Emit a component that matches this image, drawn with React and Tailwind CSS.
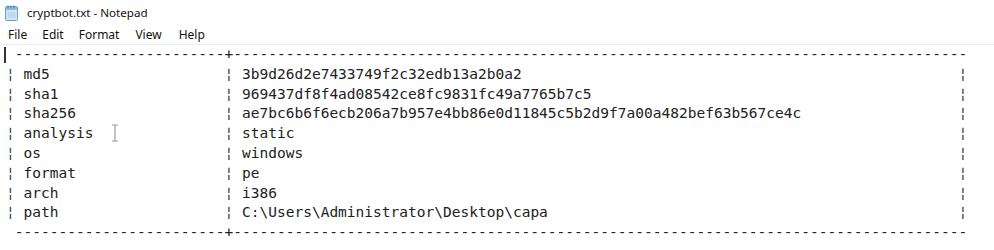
import React from 'react';

const rows = [
  ['md5', '3b9d26d2e7433749f2c32edb13a2b0a2'],
  ['sha1', '969437df8f4ad08542ce8fc9831fc49a7765b7c5'],
  ['sha256', 'ae7bc6b6f6ecb206a7b957e4bb86e0d11845c5b2d9f7a00a482bef63b567ce4c'],
  ['analysis', 'static'],
  ['os', 'windows'],
  ['format', 'pe'],
  ['arch', 'i386'],
  ['path', 'C:\\Users\\Administrator\\Desktop\\capa'],
];

const rule = ' ' + '-'.repeat(24) + '+' + '-'.repeat(84);

function NotepadIcon() {
  return (
    <svg width="18" height="18" viewBox="0 0 18 18">
      <rect x="2.5" y="2.5" width="12" height="14" rx="1" fill="#cfe6f7" stroke="#6f9fc7" />
      <rect x="3" y="3" width="11" height="3" fill="#8cc2ea" />
      <path d="M5 1.5v3M8 1.5v3M11 1.5v3" stroke="#5a7a96" strokeWidth="1" />
      <path d="M4.5 9h8M4.5 11h8M4.5 13h8" stroke="#a7c7e0" strokeWidth="0.8" />
    </svg>
  );
}

function Bar() {
  return <span className="text-[#2e3f55]">¦</span>;
}

export default function App() {
  return (
    <div className="w-[994px] h-[250px] bg-white overflow-hidden relative" style={{ fontFamily: '"Noto Sans", "Open Sans", sans-serif' }}>
      {/* title bar */}
      <div className="h-[24px] flex items-center pl-[3px] pt-[1px] gap-[6px]">
        <NotepadIcon />
        <span className="text-[11.6px] text-[#111]">cryptbot.txt - Notepad</span>
      </div>

      {/* menu */}
      <div className="h-[21px] flex items-center pt-[2px] text-[12px] text-[#111] border-b border-[#ececec]">
        <span className="ml-[8px]">File</span>
        <span className="ml-[15px]">Edit</span>
        <span className="ml-[15px]">Format</span>
        <span className="ml-[16px]">View</span>
        <span className="ml-[17px]">Help</span>
      </div>

      {/* text area */}
      <pre
        className="pl-[6px] text-[14.53px] leading-[19.8px] text-[#222] m-0"
        style={{ fontFamily: '"DejaVu Sans Mono", "Liberation Mono", monospace' }}
      >
        {rule + '\n'}
        {rows.map(([k, v]) => (
          <React.Fragment key={k}>
            <Bar />
            {' ' + k.padEnd(23, ' ')}
            <Bar />
            {' ' + v.padEnd(82, ' ')}
            <Bar />
            {'\n'}
          </React.Fragment>
        ))}
        {rule}
      </pre>

      {/* caret */}
      <div className="absolute left-[4px] top-[47px] w-[2px] h-[16px] bg-[#333]" />

      {/* mouse I-beam */}
      <svg className="absolute left-[110px] top-[124px]" width="10" height="18" viewBox="0 0 10 18">
        <path d="M2 1h6M5 1v16M2 17h6" stroke="#9a9a9a" strokeWidth="1.2" fill="none" />
      </svg>
    </div>
  );
}
